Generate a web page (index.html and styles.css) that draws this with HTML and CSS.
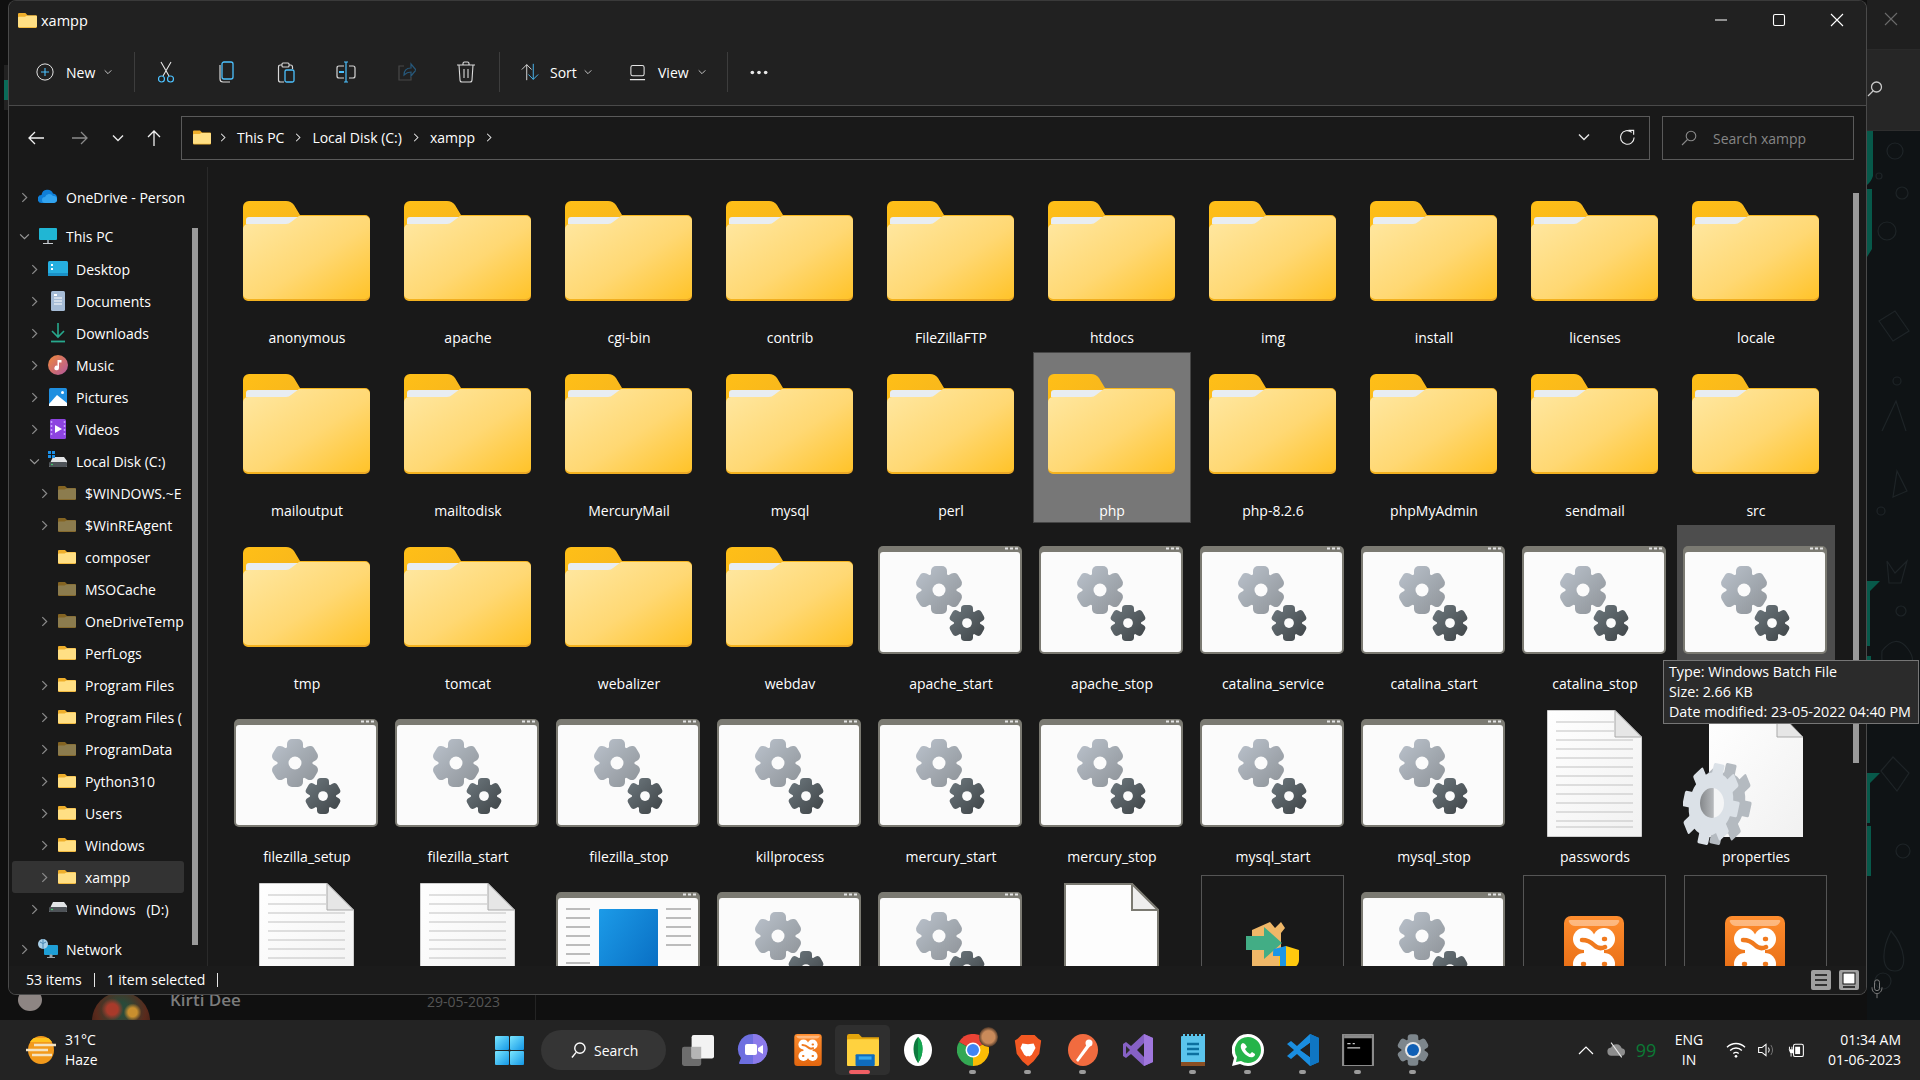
FILE: index.html
```html
<!DOCTYPE html>
<html lang="en">
  <head>
    <meta charset="UTF-8" />
    <title>xampp - File Explorer</title>
    <link rel="stylesheet" href="styles.css">
  </head>
  <body>
    <svg class="defs" width="0" height="0">
      <defs>
        <linearGradient id="gFront" x1="0" y1="0" x2="1" y2="1">
          <stop offset="0" stop-color="#ffe8a3"/><stop offset=".55" stop-color="#ffd873"/><stop offset="1" stop-color="#ffc329"/>
        </linearGradient>
        <linearGradient id="gTab" x1="0" y1="0" x2="1" y2="1">
          <stop offset="0" stop-color="#ffbf17"/><stop offset="1" stop-color="#eaa726"/>
        </linearGradient>
        <linearGradient id="gGearLight" x1="0" y1="0" x2="1" y2="1">
          <stop offset="0" stop-color="#bcc4ce"/><stop offset="1" stop-color="#8c9196"/>
        </linearGradient>
        <linearGradient id="gGearDark" x1="0" y1="0" x2="1" y2="1">
          <stop offset="0" stop-color="#6f7a80"/><stop offset="1" stop-color="#3c4144"/>
        </linearGradient>
        <linearGradient id="gDoc" x1="0" y1="0" x2="1" y2="1">
          <stop offset="0" stop-color="#ffffff"/><stop offset="1" stop-color="#f1f1f1"/>
        </linearGradient>
        <linearGradient id="gBlue" x1="0" y1="0" x2="1" y2="1">
          <stop offset="0" stop-color="#1c9be8"/><stop offset="1" stop-color="#0565bb"/>
        </linearGradient>
        <linearGradient id="gXampp" x1="0" y1="0" x2="0" y2="1">
          <stop offset="0" stop-color="#ff8d2e"/><stop offset="1" stop-color="#e2660f"/>
        </linearGradient>
        <linearGradient id="gStart" x1="0" y1="0" x2="1" y2="1">
          <stop offset="0" stop-color="#7ae6ff"/><stop offset="1" stop-color="#1497e6"/>
        </linearGradient>
        <linearGradient id="gMusic" x1="0" y1="0" x2="1" y2="1">
          <stop offset="0" stop-color="#f0893a"/><stop offset="1" stop-color="#b0569e"/>
        </linearGradient>
        <linearGradient id="gHole" x1="0" y1="0" x2="1" y2="0">
          <stop offset="0" stop-color="#85888b"/><stop offset=".55" stop-color="#b5b8bb"/><stop offset=".6" stop-color="#f4f5f6"/><stop offset="1" stop-color="#f4f5f6"/>
        </linearGradient>
        <mask id="gearMask" maskUnits="userSpaceOnUse" x="-26" y="-26" width="52" height="52">
          <g fill="#fff">
            <circle r="17.5"/>
            <rect x="-8" y="-24" width="16" height="48" rx="5"/>
            <rect x="-8" y="-24" width="16" height="48" rx="5" transform="rotate(60)"/>
            <rect x="-8" y="-24" width="16" height="48" rx="5" transform="rotate(120)"/>
          </g>
          <circle r="6.5" fill="#000"/>
        </mask>
      </defs>

      <symbol id="folder" viewBox="0 0 127 100">
        <path fill="url(#gTab)" d="M6 0H43q5 0 8 4l6 10h65a5 5 0 0 1 5 5v76a5 5 0 0 1-5 5H5a5 5 0 0 1-5-5V6a6 6 0 0 1 6-6z"/>
        <path fill="#e8edf2" d="M6 16h51l-10 7H3v-4a3 3 0 0 1 3-3z"/>
        <path fill="url(#gFront)" d="M5 23H43q3 0 5-2l8-6h66a5 5 0 0 1 5 5v73a5 5 0 0 1-5 5H5a5 5 0 0 1-5-5V28a5 5 0 0 1 5-5z"/>
      </symbol>

      <symbol id="foldersm" viewBox="0 0 18 14">
        <path fill="#eeae2b" d="M1 0H7l2 2h8a1 1 0 0 1 1 1v10a1 1 0 0 1-1 1H1a1 1 0 0 1-1-1V1a1 1 0 0 1 1-1z"/>
        <path fill="#ffdf84" d="M1 3.500H6.500l2-1H17a1 1 0 0 1 1 1V12.300a1 1 0 0 1-1 1H1a1 1 0 0 1-1-1V4.500a1 1 0 0 1 1-1z"/>
      </symbol>

      <symbol id="bat" viewBox="0 0 144 108">
        <rect width="144" height="108" rx="5" fill="#7b7a72"/>
        <rect x="2" y="6" width="140" height="100" rx="3" fill="#fbfbfb"/>
        <path d="M127 1.500h3v2h-3zM132 1.500h3v2h-3zM137 1.500h3v2h-3z" fill="#e4e4e4"/>
        <g transform="translate(61 44)"><rect x="-25" y="-25" width="50" height="50" fill="url(#gGearLight)" mask="url(#gearMask)"/></g>
        <g transform="translate(89 77) scale(.75)"><rect x="-25" y="-25" width="50" height="50" fill="url(#gGearDark)" mask="url(#gearMask)"/></g>
      </symbol>

      <symbol id="app" viewBox="0 0 144 108">
        <rect width="144" height="108" rx="5" fill="#7b7a72"/>
        <rect x="2" y="6" width="140" height="100" rx="3" fill="#fbfbfb"/>
        <path d="M127 1.500h3v2h-3zM132 1.500h3v2h-3zM137 1.500h3v2h-3z" fill="#e4e4e4"/>
        <rect x="43" y="17" width="59" height="91" rx="1" fill="url(#gBlue)"/>
        <path d="M10 17h24M10 26h24M10 35h24M10 44h24M10 53h24M10 62h24M10 71h24M110 17h25M110 26h25M110 35h25M110 44h25M110 53h25" stroke="#a8a8a8" stroke-width="1.500"/>
      </symbol>

      <symbol id="doc" viewBox="0 0 95 127">
        <path d="M.5.500H68L94.500 27V126.500H.5z" fill="url(#gDoc)" stroke="#cfcfcf"/>
        <path d="M9 12h58M9 21h58M9 30h77M9 39h77M9 48h77M9 57h77M9 66h77M9 75h77M9 84h77M9 93h77M9 102h77M9 111h77M9 117h77" stroke="#c2c2c2" stroke-width="1.200"/>
        <path d="M68 .5V27H94.500z" fill="#e6e6e6" stroke="#a9a9a9"/>
      </symbol>

      <symbol id="blank" viewBox="0 0 95 127">
        <path d="M1 1H68L94 27V126H1z" fill="#fdfdfd" stroke="#7b7a72" stroke-width="2"/>
        <path d="M68 1V27H94z" fill="#eeeeee" stroke="#7b7a72" stroke-width="2"/>
      </symbol>

      <symbol id="props" viewBox="0 0 120 135">
        <path d="M26 0H94L120 27V127H26z" fill="url(#gDoc)"/>
        <path d="M94 .5V27H120z" fill="#e6e6e6" stroke="#a9a9a9"/>
        <g transform="translate(40 94) rotate(12) scale(.68 1)" fill="#b4bac0">
          <circle r="32"/>
          <rect x="-8" y="-41" width="16" height="82" rx="2"/>
          <rect x="-8" y="-41" width="16" height="82" rx="2" transform="rotate(45)"/>
          <rect x="-8" y="-41" width="16" height="82" rx="2" transform="rotate(90)"/>
          <rect x="-8" y="-41" width="16" height="82" rx="2" transform="rotate(135)"/>
        </g>
        <g transform="translate(28 94) rotate(12) scale(.68 1)" fill="#dbe1e7">
          <circle r="32"/>
          <rect x="-8" y="-41" width="16" height="82" rx="2"/>
          <rect x="-8" y="-41" width="16" height="82" rx="2" transform="rotate(45)"/>
          <rect x="-8" y="-41" width="16" height="82" rx="2" transform="rotate(90)"/>
          <rect x="-8" y="-41" width="16" height="82" rx="2" transform="rotate(135)"/>
        </g>
        <ellipse cx="29" cy="93" rx="12" ry="15" fill="url(#gHole)"/>
      </symbol>

      <symbol id="xamppLogo" viewBox="0 0 60 70">
        <rect width="60" height="70" rx="7" fill="url(#gXampp)"/>
        <path d="M6 4h48q2 0 1 2-2 4-6 4H11q-4 0-6-4-1-2 1-2z" fill="#fff" opacity=".4"/>
        <g fill="#fff">
          <circle cx="20" cy="23" r="11"/><circle cx="40" cy="23" r="11"/><circle cx="20" cy="48" r="11"/><circle cx="40" cy="48" r="11"/>
          <rect x="20" y="20" width="20" height="32"/>
        </g>
        <path d="M18 24q7 0 12 5t11 2M41 23h-1M19 48h1M41 48h-1" fill="none" stroke="#f07a1e" stroke-width="4.500" stroke-linecap="round"/>
      </symbol>

      <symbol id="setupBox" viewBox="0 0 53 45">
        <path d="M6 8 24 0l5 6 6-6 4 6-4 5V45H6z" fill="#efb768"/>
        <path d="M0 14H18V5L36 21 18 37V28H0z" fill="#42ad85"/>
        <path d="M40 24l13 4V38c0 6-6 8-6 8H33V28z" fill="#ffc90e"/>
        <path d="M40 24v10H27c0-4 0-6 1-7zM40 34h-6v12h6z" fill="#1b96e6"/>
      </symbol>

      <symbol id="chevR" viewBox="0 0 8 12"><path d="M1.500 1 6.500 6l-5 5" fill="none" stroke="currentColor" stroke-width="1.400"/></symbol>
      <symbol id="chevD" viewBox="0 0 12 8"><path d="M1 1.500 6 6.500l5-5" fill="none" stroke="currentColor" stroke-width="1.400"/></symbol>
    </svg>

    <div class="desk">
      <div class="wa-right">
        <div class="wa-top">
          <svg class="wa-x" viewBox="0 0 14 14"><path d="M1 1l12 12M13 1 1 13" stroke="#6b6b6b" stroke-width="1.100"/></svg>
        </div>
        <div class="wa-search">
          <svg class="wa-glass" viewBox="0 0 16 16"><circle cx="9.500" cy="6.500" r="5" fill="none" stroke="#c9c9c9" stroke-width="1.300"/><path d="M6 10.500 1 15.500" stroke="#c9c9c9" stroke-width="1.300"/></svg>
        </div>
        <svg class="wa-doodle" viewBox="0 0 53 889">
          <g fill="none" stroke="#1e2427" stroke-width="1.200">
            <circle cx="28" cy="20" r="8"/><circle cx="12" cy="45" r="3"/><circle cx="35" cy="62" r="6"/><circle cx="20" cy="100" r="9"/>
            <path d="M12 190l16-10 14 20-16 10zM15 300l14-30 10 30M30 340l10 20-14 6zM20 430l8 12 12-12-6 22H22zM15 520q14-18 26-2t-8 26-18-24zM14 640l12-14 16 16-12 18zM24 800c-10 20-10 40 4 40s10-24-4-40z"/>
            <circle cx="30" cy="250" r="4"/><circle cx="14" cy="380" r="4"/><circle cx="34" cy="480" r="5"/><circle cx="20" cy="580" r="6"/><circle cx="36" cy="720" r="7"/><circle cx="16" cy="850" r="8"/>
          </g>
          <g fill="#07594a">
            <path d="M0 0h6v45q-2 6-6 9zM0 58h5v60l-5 8zM0 450h13L3 460v55H0zM0 525h4v45H0zM0 642h13L3 652v40H0zM0 695h4v50H0z"/>
          </g>
        </svg>
      </div>
      <span class="wa-edge"></span>

      <div class="wa-bottom">
        <span class="wa-badge"></span>
        <span class="wa-avatar"></span>
        <span class="wa-name">Kirti Dee</span>
        <span class="wa-date">29-05-2023</span>
        <span class="wa-divider"></span>
      </div>

      <svg class="mic" viewBox="0 0 14 24"><rect x="4" y="1" width="6" height="13" rx="3" fill="none" stroke="#7b7b7b" stroke-width="1.200"/><path d="M1 10c0 10 12 10 12 0M7 18v5" fill="none" stroke="#7b7b7b" stroke-width="1.200"/></svg>

      <div class="window">
        <header class="head">
          <div class="titlebar">
            <svg class="title-icon"><use href="#foldersm"/></svg>
            <span class="title-text">xampp</span>
            <div class="caption">
              <svg viewBox="0 0 14 14"><path d="M1 7h12" stroke="#fff" stroke-width="1.100"/></svg>
              <svg viewBox="0 0 14 14"><rect x="1.500" y="1.500" width="11" height="11" rx="1.500" fill="none" stroke="#fff" stroke-width="1.100"/></svg>
              <svg viewBox="0 0 14 14"><path d="M1 1l12 12M13 1 1 13" stroke="#fff" stroke-width="1.100"/></svg>
            </div>
          </div>
          <div class="toolbar">
            <div class="tool tool-new">
              <svg class="ti18" viewBox="0 0 20 20"><circle cx="10" cy="10" r="9" fill="none" stroke="#e6e6e6" stroke-width="1.100"/><path d="M10 5.500v9M5.500 10h9" stroke="#4cc2ff" stroke-width="1.200"/></svg>
              <span>New</span>
              <svg class="tchev"><use href="#chevD"/></svg>
            </div>
            <span class="sep"></span>
            <div class="tool-icons">
              <svg class="ti" viewBox="0 0 20 22"><path d="M5 1l8 14M15 1 7 15" stroke="#e6e6e6" stroke-width="1.100" fill="none"/><circle cx="5.500" cy="18" r="3" fill="none" stroke="#4cc2ff" stroke-width="1.200"/><circle cx="14.500" cy="18" r="3" fill="none" stroke="#4cc2ff" stroke-width="1.200"/></svg>
              <svg class="ti" viewBox="0 0 20 22"><path d="M4 4v14q0 3 3 3h7" fill="none" stroke="#d8d8d8" stroke-width="1.200"/><rect x="6" y="1" width="11" height="17" rx="2" fill="none" stroke="#4cc2ff" stroke-width="1.300"/></svg>
              <svg class="ti" viewBox="0 0 20 22"><path d="M6 4H4.500q-2 0-2 2v13q0 2 2 2H8M13 4h1.500q2 0 2 2v2" fill="none" stroke="#d8d8d8" stroke-width="1.200"/><rect x="6" y="2" width="7" height="4" rx="1" fill="none" stroke="#d8d8d8" stroke-width="1.100"/><rect x="9" y="9" width="9" height="12" rx="1.500" fill="none" stroke="#4cc2ff" stroke-width="1.300"/></svg>
              <svg class="ti" viewBox="0 0 20 22"><path d="M8 5H3q-2 0-2 2v8q0 2 2 2h5M13 5h4q2 0 2 2v8q0 2-2 2h-4" fill="none" stroke="#d8d8d8" stroke-width="1.200"/><path d="M8 1h4M10 1v20M8 21h4" stroke="#4cc2ff" stroke-width="1.200" fill="none"/><rect x="3" y="10" width="5" height="2" fill="#4cc2ff"/></svg>
              <svg class="ti" viewBox="0 0 20 22"><path d="M8 5H3v14h12v-3" fill="none" stroke="#484848" stroke-width="1.200"/><path d="M8 14c0-5 3-7 7-7V3l5 6-5 6v-4c-3 0-5 1-7 3z" fill="none" stroke="#27587a" stroke-width="1.200"/></svg>
              <svg class="ti" viewBox="0 0 20 22"><path d="M1 4h18M7 4V2.500Q7 1 8.500 1h3Q13 1 13 2.500V4M3 4l1 15q0 2 2 2h8q2 0 2-2l1-15M8 8v9M12 8v9" fill="none" stroke="#dcdcdc" stroke-width="1.100"/></svg>
            </div>
            <span class="sep sep-b"></span>
            <div class="tool tool-sort">
              <svg class="ti18" viewBox="0 0 22 22"><path d="M7 21V2M1 8l6-6 6 6" fill="none" stroke="#e6e6e6" stroke-width="1.100"/><path d="M15 1v19M9 14l6 6 6-6" fill="none" stroke="#4cc2ff" stroke-width="1.100"/></svg>
              <span>Sort</span>
              <svg class="tchev"><use href="#chevD"/></svg>
            </div>
            <div class="tool tool-view">
              <svg class="ti16" viewBox="0 0 18 18"><rect x="2" y="1.500" width="14" height="11" rx="2" fill="none" stroke="#e6e6e6" stroke-width="1.100"/><path d="M1 16.500h16" stroke="#e6e6e6" stroke-width="1.200"/></svg>
              <span>View</span>
              <svg class="tchev"><use href="#chevD"/></svg>
            </div>
            <span class="sep"></span>
            <svg class="more" viewBox="0 0 22 6"><circle cx="3" cy="3" r="2.200" fill="#e8e8e8"/><circle cx="11" cy="3" r="2.200" fill="#e8e8e8"/><circle cx="19" cy="3" r="2.200" fill="#e8e8e8"/></svg>
          </div>
        </header>

        <div class="addressrow">
          <div class="nav">
            <svg viewBox="0 0 18 18"><path d="M17 9H2M8 3 2 9l6 6" fill="none" stroke="#f2f2f2" stroke-width="1.300"/></svg>
            <svg viewBox="0 0 18 18"><path d="M1 9h15M10 3l6 6-6 6" fill="none" stroke="#8a8a8a" stroke-width="1.300"/></svg>
            <svg class="nav-small" viewBox="0 0 12 8"><path d="M1 1.500 6 6.500l5-5" fill="none" stroke="#e8e8e8" stroke-width="1.400"/></svg>
            <svg viewBox="0 0 18 18"><path d="M9 17V2M3 8l6-6 6 6" fill="none" stroke="#f2f2f2" stroke-width="1.300"/></svg>
          </div>
          <div class="address">
            <svg class="addr-folder"><use href="#foldersm"/></svg>
            <svg class="crumb"><use href="#chevR"/></svg>
            <span>This PC</span>
            <svg class="crumb"><use href="#chevR"/></svg>
            <span>Local Disk (C:)</span>
            <svg class="crumb"><use href="#chevR"/></svg>
            <span>xampp</span>
            <svg class="crumb"><use href="#chevR"/></svg>
            <svg class="addr-drop"><use href="#chevD"/></svg>
            <svg class="addr-refresh" viewBox="0 0 18 18"><path d="M13.500 3.500A7.200 7.200 0 1 0 16 9" fill="none" stroke="#eee" stroke-width="1.200"/><path d="M10 1.500h5.500V6" fill="none" stroke="#eee" stroke-width="1.200"/></svg>
          </div>
          <div class="search">
            <svg viewBox="0 0 16 16"><circle cx="10" cy="6" r="4.800" fill="none" stroke="#8a8a8a" stroke-width="1.100"/><path d="M6.500 9.500 1 15" stroke="#8a8a8a" stroke-width="1.100"/></svg>
            <span>Search xampp</span>
          </div>
        </div>

        <div class="main">
          <nav class="side">
            <div class="row lv0"><svg class="chev"><use href="#chevR"/></svg>
              <svg class="si" viewBox="0 0 20 20"><path d="M4 16a4 4 0 0 1-.500-8A6 6 0 0 1 15 6.500 4.800 4.800 0 0 1 15 16z" fill="#0f7fd8"/><path d="M7 16a3 3 0 0 1 0-6 4.500 4.500 0 0 1 8-1 3.500 3.500 0 0 1 1 7z" fill="#32a4ef"/></svg>
              <span>OneDrive - Person</span></div>
            <div class="row lv0 gap-top"><svg class="chev-d"><use href="#chevD"/></svg>
              <svg class="si" viewBox="0 0 20 20"><rect x="1" y="2" width="18" height="12" rx="1" fill="#20b6d4"/><path d="M9 14h2v3H9z" fill="#8a9298"/><path d="M5 17h10v1H5z" fill="#c8ccd0"/></svg>
              <span>This PC</span></div>
            <div class="row lv1 gap-one"><svg class="chev"><use href="#chevR"/></svg>
              <svg class="si" viewBox="0 0 20 20"><rect y="2" width="20" height="15" rx="1.500" fill="#26afe0"/><path d="M3 5h2v2H3zM3 9h2v2H3z" fill="#fff"/><rect y="14" width="20" height="3" fill="#1a90c6"/></svg>
              <span>Desktop</span></div>
            <div class="row lv1"><svg class="chev"><use href="#chevR"/></svg>
              <svg class="si" viewBox="0 0 20 20"><rect x="3" y="0" width="14" height="20" rx="1.500" fill="#a6bcd6"/><path d="M6 7h8M6 10h8M6 13h8" stroke="#fff" stroke-width="1.100"/><rect x="6" y="3" width="3" height="2" fill="#fff"/></svg>
              <span>Documents</span></div>
            <div class="row lv1"><svg class="chev"><use href="#chevR"/></svg>
              <svg class="si" viewBox="0 0 20 20"><path d="M10 0v13M4 8l6 6 6-6" fill="none" stroke="#27a98d" stroke-width="1.600"/><path d="M3 18.500h14" stroke="#27a98d" stroke-width="1.800"/></svg>
              <span>Downloads</span></div>
            <div class="row lv1"><svg class="chev"><use href="#chevR"/></svg>
              <svg class="si" viewBox="0 0 20 20"><circle cx="10" cy="10" r="10" fill="url(#gMusic)"/><path d="M9.500 5h4v2.500H11V13a2.300 2.300 0 1 1-1.500-2.200z" fill="#fff"/></svg>
              <span>Music</span></div>
            <div class="row lv1"><svg class="chev"><use href="#chevR"/></svg>
              <svg class="si" viewBox="0 0 20 20"><rect x="1" y="1" width="18" height="18" rx="1.500" fill="#1f8fe0"/><path d="M1 17 9 8l10 8v3H1z" fill="#fff"/><circle cx="14.500" cy="5.500" r="1.500" fill="#fff"/></svg>
              <span>Pictures</span></div>
            <div class="row lv1"><svg class="chev"><use href="#chevR"/></svg>
              <svg class="si" viewBox="0 0 20 20"><rect x="2" y="0" width="16" height="20" rx="1.500" fill="#8d43e0"/><path d="M7 6l7 4-7 4z" fill="#fff"/><path d="M3.500 2v16M16.500 2v16" stroke="#c79dff" stroke-width="1.500" stroke-dasharray="2 2"/></svg>
              <span>Videos</span></div>
            <div class="row lv1"><svg class="chev-d"><use href="#chevD"/></svg>
              <svg class="si" viewBox="0 0 20 20"><path d="M3 10l2-4h11l3 4v5a1 1 0 0 1-1 1H2a1 1 0 0 1-1-1z" fill="#e2e4e6"/><rect x="1" y="11" width="18" height="5" rx="1" fill="#4e5358"/><circle cx="4" cy="13.500" r=".8" fill="#3cf070"/><path d="M0 0h3v3H0zM4 0h3v3H4zM0 4h3v3H0zM4 4h3v3H4z" fill="#1b8fe6"/></svg>
              <span>Local Disk (C:)</span></div>
            <div class="row lv2"><svg class="chev"><use href="#chevR"/></svg><svg class="fd dim"><use href="#foldersm"/></svg><span>$WINDOWS.~E</span></div>
            <div class="row lv2"><svg class="chev"><use href="#chevR"/></svg><svg class="fd dim"><use href="#foldersm"/></svg><span>$WinREAgent</span></div>
            <div class="row lv2"><i class="chev"></i><svg class="fd"><use href="#foldersm"/></svg><span>composer</span></div>
            <div class="row lv2"><i class="chev"></i><svg class="fd dim"><use href="#foldersm"/></svg><span>MSOCache</span></div>
            <div class="row lv2"><svg class="chev"><use href="#chevR"/></svg><svg class="fd dim"><use href="#foldersm"/></svg><span>OneDriveTemp</span></div>
            <div class="row lv2"><i class="chev"></i><svg class="fd"><use href="#foldersm"/></svg><span>PerfLogs</span></div>
            <div class="row lv2"><svg class="chev"><use href="#chevR"/></svg><svg class="fd"><use href="#foldersm"/></svg><span>Program Files</span></div>
            <div class="row lv2"><svg class="chev"><use href="#chevR"/></svg><svg class="fd"><use href="#foldersm"/></svg><span>Program Files (</span></div>
            <div class="row lv2"><svg class="chev"><use href="#chevR"/></svg><svg class="fd dim"><use href="#foldersm"/></svg><span>ProgramData</span></div>
            <div class="row lv2"><svg class="chev"><use href="#chevR"/></svg><svg class="fd"><use href="#foldersm"/></svg><span>Python310</span></div>
            <div class="row lv2"><svg class="chev"><use href="#chevR"/></svg><svg class="fd"><use href="#foldersm"/></svg><span>Users</span></div>
            <div class="row lv2"><svg class="chev"><use href="#chevR"/></svg><svg class="fd"><use href="#foldersm"/></svg><span>Windows</span></div>
            <div class="row lv2 current"><svg class="chev"><use href="#chevR"/></svg><svg class="fd"><use href="#foldersm"/></svg><span>xampp</span></div>
            <div class="row lv1"><svg class="chev"><use href="#chevR"/></svg>
              <svg class="si" viewBox="0 0 20 20"><path d="M3 7l2-4h11l3 4v5a1 1 0 0 1-1 1H2a1 1 0 0 1-1-1z" fill="#e2e4e6"/><rect x="1" y="8" width="18" height="5" rx="1" fill="#4e5358"/><circle cx="4" cy="10.500" r=".8" fill="#3cf070"/></svg>
              <span>Windows &nbsp; (D:)</span></div>
            <div class="row lv0 gap-net"><svg class="chev"><use href="#chevR"/></svg>
              <svg class="si" viewBox="0 0 20 20"><rect x="6" y="6" width="14" height="10" rx="1" fill="#1f9fd6"/><path d="M12 16h2v2h-2zM9 18.500h8" stroke="#9aa3a8" fill="#9aa3a8"/><circle cx="5" cy="5" r="5" fill="#a9cfe8"/><path d="M2 3q3 3 6 0M5 0v10" stroke="#4b89b5" fill="none"/></svg>
              <span>Network</span></div>
            <span class="side-thumb"></span>
          </nav>

          <section class="files">
            <div class="grid">
              <div class="cell"><svg class="ic-folder"><use href="#folder"/></svg><span class="name">anonymous</span></div>
              <div class="cell"><svg class="ic-folder"><use href="#folder"/></svg><span class="name">apache</span></div>
              <div class="cell"><svg class="ic-folder"><use href="#folder"/></svg><span class="name">cgi-bin</span></div>
              <div class="cell"><svg class="ic-folder"><use href="#folder"/></svg><span class="name">contrib</span></div>
              <div class="cell"><svg class="ic-folder"><use href="#folder"/></svg><span class="name">FileZillaFTP</span></div>
              <div class="cell"><svg class="ic-folder"><use href="#folder"/></svg><span class="name">htdocs</span></div>
              <div class="cell"><svg class="ic-folder"><use href="#folder"/></svg><span class="name">img</span></div>
              <div class="cell"><svg class="ic-folder"><use href="#folder"/></svg><span class="name">install</span></div>
              <div class="cell"><svg class="ic-folder"><use href="#folder"/></svg><span class="name">licenses</span></div>
              <div class="cell"><svg class="ic-folder"><use href="#folder"/></svg><span class="name">locale</span></div>

              <div class="cell"><svg class="ic-folder"><use href="#folder"/></svg><span class="name">mailoutput</span></div>
              <div class="cell"><svg class="ic-folder"><use href="#folder"/></svg><span class="name">mailtodisk</span></div>
              <div class="cell"><svg class="ic-folder"><use href="#folder"/></svg><span class="name">MercuryMail</span></div>
              <div class="cell"><svg class="ic-folder"><use href="#folder"/></svg><span class="name">mysql</span></div>
              <div class="cell"><svg class="ic-folder"><use href="#folder"/></svg><span class="name">perl</span></div>
              <div class="cell selected"><svg class="ic-folder"><use href="#folder"/></svg><span class="name">php</span></div>
              <div class="cell"><svg class="ic-folder"><use href="#folder"/></svg><span class="name">php-8.2.6</span></div>
              <div class="cell"><svg class="ic-folder"><use href="#folder"/></svg><span class="name">phpMyAdmin</span></div>
              <div class="cell"><svg class="ic-folder"><use href="#folder"/></svg><span class="name">sendmail</span></div>
              <div class="cell"><svg class="ic-folder"><use href="#folder"/></svg><span class="name">src</span></div>

              <div class="cell"><svg class="ic-folder"><use href="#folder"/></svg><span class="name">tmp</span></div>
              <div class="cell"><svg class="ic-folder"><use href="#folder"/></svg><span class="name">tomcat</span></div>
              <div class="cell"><svg class="ic-folder"><use href="#folder"/></svg><span class="name">webalizer</span></div>
              <div class="cell"><svg class="ic-folder"><use href="#folder"/></svg><span class="name">webdav</span></div>
              <div class="cell"><svg class="ic-bat"><use href="#bat"/></svg><span class="name">apache_start</span></div>
              <div class="cell"><svg class="ic-bat"><use href="#bat"/></svg><span class="name">apache_stop</span></div>
              <div class="cell"><svg class="ic-bat"><use href="#bat"/></svg><span class="name">catalina_service</span></div>
              <div class="cell"><svg class="ic-bat"><use href="#bat"/></svg><span class="name">catalina_start</span></div>
              <div class="cell"><svg class="ic-bat"><use href="#bat"/></svg><span class="name">catalina_stop</span></div>
              <div class="cell hovered"><svg class="ic-bat"><use href="#bat"/></svg></div>

              <div class="cell"><svg class="ic-bat"><use href="#bat"/></svg><span class="name">filezilla_setup</span></div>
              <div class="cell"><svg class="ic-bat"><use href="#bat"/></svg><span class="name">filezilla_start</span></div>
              <div class="cell"><svg class="ic-bat"><use href="#bat"/></svg><span class="name">filezilla_stop</span></div>
              <div class="cell"><svg class="ic-bat"><use href="#bat"/></svg><span class="name">killprocess</span></div>
              <div class="cell"><svg class="ic-bat"><use href="#bat"/></svg><span class="name">mercury_start</span></div>
              <div class="cell"><svg class="ic-bat"><use href="#bat"/></svg><span class="name">mercury_stop</span></div>
              <div class="cell"><svg class="ic-bat"><use href="#bat"/></svg><span class="name">mysql_start</span></div>
              <div class="cell"><svg class="ic-bat"><use href="#bat"/></svg><span class="name">mysql_stop</span></div>
              <div class="cell"><svg class="ic-doc"><use href="#doc"/></svg><span class="name">passwords</span></div>
              <div class="cell"><svg class="ic-props"><use href="#props"/></svg><span class="name">properties</span></div>

              <div class="cell"><svg class="ic-doc"><use href="#doc"/></svg></div>
              <div class="cell"><svg class="ic-doc"><use href="#doc"/></svg></div>
              <div class="cell"><svg class="ic-bat"><use href="#app"/></svg></div>
              <div class="cell"><svg class="ic-bat"><use href="#bat"/></svg></div>
              <div class="cell"><svg class="ic-bat"><use href="#bat"/></svg></div>
              <div class="cell"><svg class="ic-doc"><use href="#blank"/></svg></div>
              <div class="cell"><div class="frame"><svg class="fr-setup"><use href="#setupBox"/></svg></div></div>
              <div class="cell"><svg class="ic-bat"><use href="#bat"/></svg></div>
              <div class="cell"><div class="frame"><svg class="fr-xampp"><use href="#xamppLogo"/></svg></div></div>
              <div class="cell"><div class="frame"><svg class="fr-xampp"><use href="#xamppLogo"/></svg></div></div>
            </div>
            <span class="files-thumb"></span>
          </section>
        </div>

        <footer class="status">
          <span>53 items</span>
          <span class="bar">1 item selected</span>
          <span class="bar"></span>
          <div class="viewbtns">
            <svg viewBox="0 0 20 20"><rect width="20" height="20" rx="2" fill="#a0a0a0"/><path d="M4 5h12M4 10h12M4 15h12" stroke="#111" stroke-width="1.300"/></svg>
            <svg viewBox="0 0 20 20"><rect width="20" height="20" rx="2" fill="#a0a0a0"/><rect x="4" y="3" width="12" height="11" fill="#fff" stroke="#111"/><path d="M4 17h12" stroke="#111" stroke-width="1.300"/></svg>
          </div>
        </footer>
      </div>

      <div class="tooltip">
        <div>Type: Windows Batch File</div>
        <div>Size: 2.66 KB</div>
        <div>Date modified: 23-05-2022 04:40 PM</div>
      </div>
    </div>

    <div class="taskbar">
      <div class="weather">
        <svg viewBox="0 0 30 28"><ellipse cx="15" cy="14" rx="13" ry="14" fill="#f29a1c"/><path d="M8 2h14a13 14 0 0 1 4 4H4a13 14 0 0 1 4-4z" fill="#ffc21f"/><path d="M8 9h22M0 14h22M6 19h20" stroke="#f4e3c2" stroke-width="2.500"/></svg>
        <div class="two-lines"><span>31°C</span><span>Haze</span></div>
      </div>
      <div class="start">
        <svg viewBox="0 0 29 29"><rect width="14" height="14" rx="1" fill="url(#gStart)"/><rect x="15" width="14" height="14" rx="1" fill="url(#gStart)"/><rect y="15" width="14" height="14" rx="1" fill="url(#gStart)"/><rect x="15" y="15" width="14" height="14" rx="1" fill="url(#gStart)"/></svg>
      </div>
      <div class="pill">
        <svg viewBox="0 0 16 18"><circle cx="9.500" cy="7" r="5.500" fill="none" stroke="#fff" stroke-width="1.500"/><path d="M5.500 11.500 1 17" stroke="#fff" stroke-width="1.500"/></svg>
        <span>Search</span>
      </div>
      <div class="apps">
        <div class="app"><svg viewBox="0 0 30 30"><rect x="0" y="12" width="18" height="18" rx="2" fill="#6d6d6d"/><rect x="9" y="1" width="21" height="22" rx="2" fill="#f3f3f3"/><rect x="9" y="12" width="9" height="11" fill="#b5b5b5"/></svg></div>
        <div class="app"><svg viewBox="0 0 30 32"><path d="M15 0a14.500 15 0 0 1 0 30H2q-1 0-1-1l2-5A15 15 0 0 1 15 0z" fill="#6d6fe0"/><path d="M15 0a14.500 15 0 0 1 0 30z" fill="#8c7bea"/><rect x="7" y="10" width="12" height="11" rx="2" fill="#fff"/><path d="M20 14l5-3v9l-5-3z" fill="#fff"/></svg></div>
        <div class="app"><svg class="tb-xampp"><use href="#xamppLogo"/></svg></div>
        <div class="app active"><svg viewBox="0 0 30 30"><path d="M0 2q0-2 2-2h9l3 3h16v25q0 2-2 2H2q-2 0-2-2z" fill="#e3a40c"/><rect y="5" width="30" height="25" rx="1" fill="#ffd23f"/><rect x="8" y="19" width="18" height="11" rx="1" fill="#0f6cbd"/><rect x="11" y="21" width="12" height="3" fill="#35a9ef"/></svg><span class="underline"></span></div>
        <div class="app"><svg viewBox="0 0 30 32"><ellipse cx="15" cy="16" rx="14" ry="16" fill="#fff"/><path d="M15 3c6 5 6 18 0 26-6-8-6-21 0-26z" fill="#0d7a3e"/><path d="M15 3c6 5 6 18 0 26z" fill="#13a650"/></svg></div>
        <div class="app dot chrome"><svg viewBox="0 0 32 32"><path d="M16 16 2.100 8A16 16 0 0 1 29.900 8z" fill="#ea4335"/><path d="M16 16 29.900 8A16 16 0 0 1 16 32z" fill="#fbbc05"/><path d="M16 16V32A16 16 0 0 1 2.100 8z" fill="#34a853"/><circle cx="16" cy="16" r="7.500" fill="#fff"/><circle cx="16" cy="16" r="6" fill="#4285f4"/></svg><span class="face"></span></div>
        <div class="app dot"><svg viewBox="0 0 28 34"><path d="M7 1h14l4 4 3 2-2 14-6 8-6 5-6-5-6-8L0 7l3-2z" fill="#f25822"/><path d="M8 10l6 1 6-1 2 5-4 7-4 3-4-3-4-7z" fill="#fff"/><path d="M11 25l3-2 3 2-3 3z" fill="#f25822"/></svg></div>
        <div class="app dot"><svg viewBox="0 0 30 32"><ellipse cx="15" cy="16" rx="15" ry="16" fill="#f16b3f"/><path d="M8 26 20 9l3 2-13 17z" fill="#fff"/><circle cx="21" cy="9" r="3.500" fill="#fff"/></svg></div>
        <div class="app"><svg viewBox="0 0 30 32"><path d="M21 0l9 4v24l-9 4-13-12-5 4-3-2V10l3-2 5 4zM21 9l-7 7 7 7z" fill="#8661c5"/><path d="M21 0l9 4v24l-9 4z" fill="#a077dd"/><path d="M3 12v8l4-4z" fill="#2c2c2c"/></svg></div>
        <div class="app dot"><svg viewBox="0 0 24 32"><rect y="2" width="24" height="30" rx="1" fill="#5bc4ec"/><rect y="28" width="24" height="4" fill="#8a4f24"/><path d="M6 10h12M6 15h12M6 20h12" stroke="#0c6f9f" stroke-width="2.500"/><path d="M3 0v4M7 0v4M11 0v4M15 0v4M19 0v4M23 0v4" stroke="#5bc4ec" stroke-width="2"/></svg></div>
        <div class="app dot"><svg viewBox="0 0 32 32"><path d="M16 0a16 16 0 0 1 0 32q-4 0-8-2l-8 2 2-8A16 16 0 0 1 16 0z" fill="#fff"/><path d="M16 3a13 13 0 0 1 0 26q-4 0-7-2l-5 1 1-5A13 13 0 0 1 16 3z" fill="#25b44a"/><path d="M11 9c-3 1-3 5 0 9s7 6 10 5c2-1 2-2 2-3l-3-2-2 2c-2-1-4-3-5-5l2-2-2-3z" fill="#fff"/></svg></div>
        <div class="app dot"><svg viewBox="0 0 32 32"><path d="M23 0l9 4v24l-9 4-13-12-6 5-4-3 7-6-7-6 4-3 6 5z" fill="#1a8ee0"/><path d="M23 9 13 16l10 7z" fill="#232323"/><path d="M23 0l9 4v24l-9 4z" fill="#0f76c4"/><path d="M23 9v14l-9-7z" fill="#232323"/></svg></div>
        <div class="app dot"><svg viewBox="0 0 28 30"><rect width="28" height="30" rx="1" fill="#000" stroke="#8b8b8b" stroke-width="2"/><rect x="1" y="1" width="26" height="3" fill="#8b8b8b"/><path d="M4 9h3M9 9h2M4 13h12" stroke="#ccc" stroke-width="1.300"/></svg></div>
        <div class="app dot"><svg viewBox="0 0 32 32"><g transform="translate(16 16) scale(.66)"><rect x="-25" y="-25" width="50" height="50" fill="#7d868c" mask="url(#gearMask)"/></g><circle cx="16" cy="16" r="8" fill="#e8e8e8"/><circle cx="16" cy="16" r="6" fill="#0f5fb5"/></svg></div>
      </div>
      <div class="tray">
        <svg class="tr" viewBox="0 0 30 18"><path d="M8 13l7-7 7 7" fill="none" stroke="#fff" stroke-width="1.200"/></svg>
        <svg class="tr" viewBox="0 0 22 22"><path d="M6 18a5 5 0 0 1-1-10 7 7 0 0 1 13 1 4.500 4.500 0 0 1-1 9z" fill="#8d8d8d"/><path d="M5 2 18 20" stroke="#e8e8e8" stroke-width="1.300"/></svg>
        <span class="cpu">99</span>
        <div class="two-lines lang"><span>ENG</span><span>IN</span></div>
        <svg class="tr wifi" viewBox="0 0 22 20"><path d="M1 7a14 14 0 0 1 20 0M4.500 10.500a9 9 0 0 1 13 0M8 14a4.500 4.500 0 0 1 6 0" fill="none" stroke="#fff" stroke-width="1.500"/><circle cx="11" cy="17" r="1.500" fill="#fff"/></svg>
        <svg class="tr" viewBox="0 0 22 22"><path d="M2 8h4l5-4v14l-5-4H2z" fill="none" stroke="#fff" stroke-width="1.300"/><path d="M14 8q2 3 0 6" fill="none" stroke="#fff" stroke-width="1.200"/><path d="M17 5q4 6 0 12" fill="none" stroke="#777" stroke-width="1.200"/></svg>
        <svg class="tr" viewBox="0 0 22 22"><rect x="8" y="4" width="12" height="15" rx="2" fill="none" stroke="#fff" stroke-width="1.300"/><rect x="10" y="7" width="6" height="9" fill="#fff"/><path d="M2 10h6v5H4z" fill="#fff"/><path d="M3 7v3M6 7v3M5 15v4" stroke="#fff" stroke-width="1.200"/></svg>
        <div class="two-lines clock"><span>01:34 AM</span><span>01-06-2023</span></div>
      </div>
    </div>
  </body>
</html>
```

FILE: styles.css
```css
* {
  box-sizing: border-box;
}

html,
body {
  margin: 0;
  padding: 0;
  width: 1920px;
  height: 1080px;
  overflow: hidden;
  background: #111;
  font-family: "Open Sans", "Noto Sans", sans-serif;
  font-size: 14px;
  color: #fff;
}

svg {
  display: block;
  flex: none;
}

.defs {
  position: absolute;
}

.desk {
  position: relative;
  height: 1020px;
  overflow: hidden;
  background: #101010;
}

/* what shows of the chat app behind the window */
.wa-right {
  position: absolute;
  left: 1867px;
  top: 0;
  width: 53px;
  height: 1020px;
  background: #0f1315;
}

.wa-top {
  height: 50px;
  padding: 12px 0 0 17px;
  background: #1f1f1f;
  border-bottom: 1px solid #2a2a2a;
}

.wa-x {
  width: 14px;
  height: 14px;
}

.wa-search {
  height: 81px;
  padding-top: 30px;
  background: #262626;
  border-bottom: 1px solid #2e2e2e;
}

.wa-glass {
  width: 16px;
  height: 17px;
}

.wa-doodle {
  width: 53px;
  height: 889px;
}

.wa-edge {
  position: absolute;
  left: 4px;
  top: 65px;
  width: 4px;
  height: 45px;
  background: #222;
}

.wa-edge::after {
  content: "";
  display: block;
  height: 20px;
  margin-top: 15px;
  background: #0a6b58;
}

.wa-bottom {
  position: absolute;
  left: 0;
  top: 995px;
  width: 1867px;
  height: 25px;
}

.wa-badge {
  position: absolute;
  left: 18px;
  top: -6px;
  width: 24px;
  height: 22px;
  border-radius: 50%;
  background: #8d8583;
}

.wa-avatar {
  position: absolute;
  left: 92px;
  top: -3px;
  width: 58px;
  height: 58px;
  border-radius: 50%;
  background:
    radial-gradient(circle at 70% 35%, #c98f2e 0 8%, transparent 16%),
    radial-gradient(circle at 35% 30%, #a83a2a 0 10%, transparent 20%),
    radial-gradient(circle at 50% 30%, #2a4a3a 0 14%, #5a2a1c 50%, #2f1a16 85%);
}

.wa-name {
  position: absolute;
  left: 170px;
  top: -7px;
  font-size: 17px;
  font-weight: 600;
  color: #7c7c7c;
}

.wa-date {
  position: absolute;
  left: 427px;
  top: -3px;
  color: #555;
}

.wa-divider {
  position: absolute;
  left: 535px;
  top: 0;
  width: 1px;
  height: 25px;
  background: #242424;
}

.mic {
  position: absolute;
  left: 1870px;
  top: 979px;
  width: 14px;
  height: 20px;
}

/* explorer window */
.window {
  position: absolute;
  left: 8px;
  top: 0;
  width: 1859px;
  height: 995px;
  display: flex;
  flex-direction: column;
  background: #191919;
  border: 1px solid #4a4a4a;
  border-top-color: #3a3a3a;
  border-radius: 8px;
  overflow: hidden;
}

.head {
  height: 105px;
  flex: none;
  background: #212121;
  border-bottom: 1px solid #4a4a4a;
}

.titlebar {
  height: 38px;
  display: flex;
  align-items: center;
  padding-left: 9px;
}

.title-icon {
  width: 19px;
  height: 15px;
}

.title-text {
  margin-left: 4px;
  font-size: 14.500px;
}

.caption {
  margin-left: auto;
  display: flex;
  gap: 44px;
  padding-right: 22px;
}

.caption svg {
  width: 14px;
  height: 14px;
}

.toolbar {
  height: 66px;
  display: flex;
  align-items: center;
  padding-left: 27px;
}

.tool {
  display: flex;
  align-items: center;
}

.ti18 {
  width: 18px;
  height: 18px;
}

.ti16 {
  width: 17px;
  height: 17px;
}

.tchev {
  width: 8px;
  height: 6px;
  color: #cfcfcf;
}

.tool-new span {
  margin: 0 9px 0 12px;
}

.tool-new {
  width: 98px;
}

.sep {
  width: 1px;
  height: 40px;
  background: #3d3d3d;
}

.tool-icons {
  display: flex;
  gap: 40px;
  padding-left: 21px;
}

.ti {
  width: 20px;
  height: 22px;
}

.sep-b {
  margin-left: 23px;
}

.tool-sort {
  margin-left: 21px;
  width: 108px;
}

.tool-sort span {
  margin: 0 7px 0 11px;
}

.tool-view span {
  margin: 0 9px 0 12px;
}

.tool-view {
  width: 98px;
}

.more {
  width: 20px;
  height: 5px;
  margin-left: 21px;
}

.addressrow {
  height: 61px;
  flex: none;
  display: flex;
  padding-top: 10px;
}

.nav {
  width: 172px;
  height: 44px;
  display: flex;
  align-items: center;
  padding-left: 18px;
  gap: 26px;
}

.nav svg {
  width: 18px;
  height: 18px;
}

.nav .nav-small {
  width: 12px;
  height: 8px;
  margin: 0 -5px 0 -3px;
}

.address {
  width: 1469px;
  height: 44px;
  display: flex;
  align-items: center;
  padding: 0 0 2px 11px;
  border: 1px solid #5a5a5a;
}

.addr-folder {
  width: 18px;
  height: 15px;
  margin-right: -2px;
}

.crumb {
  width: 6px;
  height: 9px;
  margin: 0 11px;
  color: #e6e6e6;
}

.addr-drop {
  width: 12px;
  height: 8px;
  margin-left: auto;
  color: #e6e6e6;
}

.addr-refresh {
  width: 17px;
  height: 17px;
  margin: 0 13px 0 29px;
}

.search {
  width: 192px;
  height: 44px;
  margin-left: 12px;
  display: flex;
  align-items: center;
  padding-left: 18px;
  gap: 16px;
  border: 1px solid #5a5a5a;
  color: #868686;
}

.search svg {
  width: 16px;
  height: 16px;
}

.main {
  flex: 1;
  min-height: 0;
  display: flex;
}

/* navigation pane */
.side {
  position: relative;
  width: 199px;
  flex: none;
  padding: 14px 0 0 3px;
  border-right: 1px solid #2a2a2a;
  overflow: hidden;
}

.row {
  width: 172px;
  height: 32px;
  display: flex;
  align-items: center;
  border-radius: 3px;
  white-space: nowrap;
}

.row span {
  flex: none;
}

.gap-top {
  margin-top: 7px;
}

.gap-net {
  margin-top: 8px;
}

.gap-one {
  margin-top: 1px;
}

.lv0 {
  padding-left: 9px;
}

.lv1 {
  padding-left: 19px;
}

.lv2 {
  padding-left: 29px;
}

.chev {
  width: 7px;
  height: 11px;
  flex: none;
  color: #8a8a8a;
}

.chev-d {
  width: 11px;
  height: 7px;
  margin: 0 -2px;
  flex: none;
  color: #9a9a9a;
}

.si {
  width: 20px;
  height: 20px;
  margin: 0 8px 0 10px;
}

.fd {
  width: 18px;
  height: 14px;
  margin: 0 9px 0 10px;
}

.dim {
  opacity: 0.5;
}

.current {
  background: #333;
}

.side-thumb {
  position: absolute;
  left: 183px;
  top: 61px;
  width: 6px;
  height: 717px;
  background: #9a9a9a;
}

/* file grid */
.files {
  position: relative;
  flex: 1;
  overflow: hidden;
}

.grid {
  display: grid;
  grid-template-columns: repeat(10, 158px);
  grid-auto-rows: 171px;
  column-gap: 3px;
  row-gap: 2px;
  padding: 12px 0 0 20px;
}

.cell {
  position: relative;
  display: flex;
  flex-direction: column;
  align-items: center;
  border: 1px solid transparent;
}

.selected {
  background: #777;
  border-color: #464646;
}

.hovered {
  background: #4d4d4d;
  border-color: #4d4d4d;
}

.name {
  position: absolute;
  left: 0;
  right: 0;
  top: 148px;
  text-align: center;
  line-height: 20px;
}

.ic-folder {
  width: 127px;
  height: 100px;
  margin: 21px 2px 0 0;
}

.ic-bat {
  width: 144px;
  height: 108px;
  margin: 20px 2px 0 0;
}

.ic-doc {
  width: 95px;
  height: 127px;
  margin: 11px 2px 0 0;
}

.ic-props {
  width: 120px;
  height: 135px;
  margin: 11px 0 0 5px;
  align-self: flex-start;
}

.frame {
  width: 143px;
  height: 130px;
  margin: 3px 2px 0 0;
  padding-top: 40px;
  border: 1px solid #555;
  display: flex;
  justify-content: center;
}

.fr-xampp {
  width: 60px;
  height: 70px;
}

.fr-setup {
  width: 53px;
  height: 45px;
  margin-top: 6px;
}

.tooltip {
  position: absolute;
  left: 1663px;
  top: 660px;
  width: 256px;
  height: 64px;
  padding: 1px 5px;
  background: #2b2b2b;
  border: 1px solid #767676;
  font-size: 14.300px;
  line-height: 20px;
  white-space: nowrap;
}

.files-thumb {
  position: absolute;
  left: 1645px;
  top: 26px;
  width: 6px;
  height: 570px;
  background: #9a9a9a;
}

.status {
  height: 28px;
  flex: none;
  display: flex;
  align-items: center;
  padding-left: 17px;
  background: #1b1b1b;
  position: relative;
  line-height: 14px;
}

.bar {
  margin-left: 12px;
  padding-left: 12px;
  border-left: 1px solid #e6e6e6;
  height: 14px;
}

.viewbtns {
  margin-left: auto;
  display: flex;
  gap: 8px;
  padding-right: 7px;
}

.viewbtns svg {
  width: 20px;
  height: 20px;
}

/* taskbar */
.taskbar {
  height: 60px;
  display: flex;
  align-items: center;
  background: #232323;
}

.weather {
  width: 482px;
  display: flex;
  align-items: center;
  padding-left: 26px;
  gap: 9px;
}

.weather svg {
  width: 30px;
  height: 28px;
}

.two-lines {
  display: flex;
  flex-direction: column;
  line-height: 20px;
}

.start {
  width: 59px;
  padding-left: 13px;
}

.start svg {
  width: 29px;
  height: 29px;
}

.pill {
  width: 125px;
  height: 40px;
  display: flex;
  align-items: center;
  padding-left: 30px;
  gap: 8px;
  background: #353535;
  border-radius: 20px;
}

.pill svg {
  width: 15px;
  height: 18px;
}

.apps {
  display: flex;
  margin-left: 4px;
}

.app {
  position: relative;
  width: 55px;
  height: 50px;
  display: flex;
  align-items: center;
  justify-content: center;
}

.app svg {
  width: 32px;
  height: 32px;
}

.app .tb-xampp {
  width: 30px;
  height: 32px;
}

.active {
  background: #2f2f2f;
  border-radius: 5px;
}

.underline {
  position: absolute;
  left: 14px;
  bottom: 1px;
  width: 21px;
  height: 4px;
  border-radius: 2px;
  background: #f05f64;
}

.dot::after {
  content: "";
  position: absolute;
  left: 24px;
  bottom: 1px;
  width: 7px;
  height: 4px;
  border-radius: 2px;
  background: #9b9b9b;
}

.face {
  position: absolute;
  left: 34px;
  top: 2px;
  width: 19px;
  height: 20px;
  border-radius: 50%;
  background: radial-gradient(circle at 50% 50%, #c98a5a 0 45%, #3a2a20 75%);
}

.tray {
  margin-left: auto;
  display: flex;
  align-items: center;
  padding-right: 19px;
}

.tr {
  width: 30px;
  height: 18px;
}

.cpu {
  width: 30px;
  text-align: center;
  font-size: 18px;
  color: #0b7a35;
}

.lang {
  width: 56px;
  margin-right: 4px;
  align-items: center;
}

.clock {
  width: 90px;
  align-items: flex-end;
}
```
